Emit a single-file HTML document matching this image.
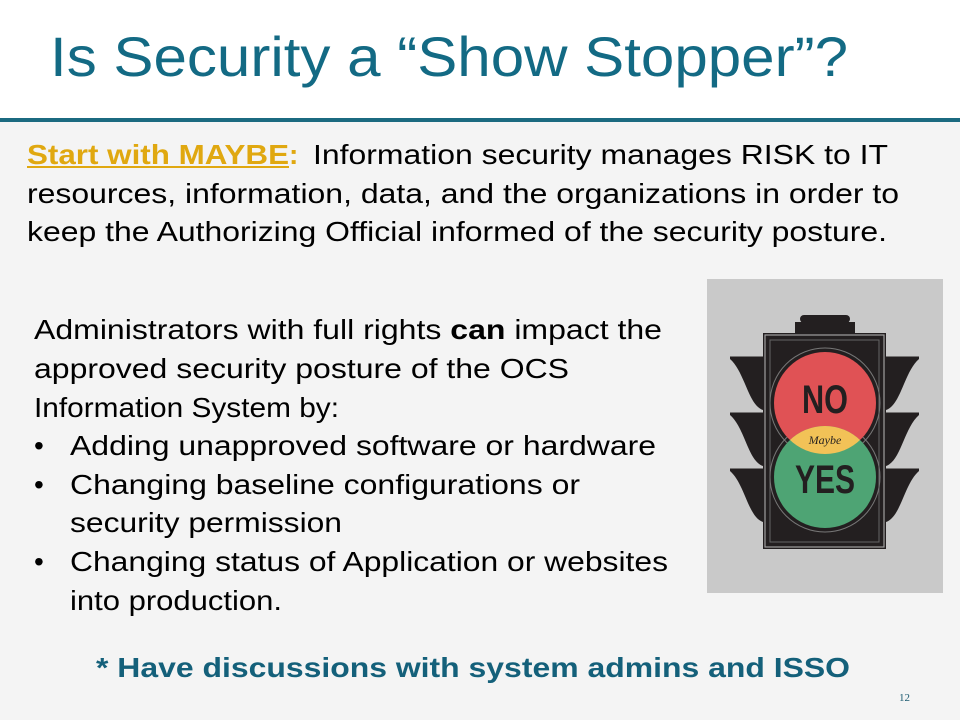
<!DOCTYPE html>
<html><head><meta charset="utf-8"><style>
html,body{margin:0;padding:0;width:960px;height:720px;overflow:hidden;background:#fff}
svg{display:block}
text{font-family:"Liberation Sans",Arial,sans-serif}
</style></head><body>
<svg width="960" height="720" viewBox="0 0 960 720" xmlns="http://www.w3.org/2000/svg">
<defs><clipPath id="rc"><circle cx="825" cy="403" r="51"/></clipPath></defs>
<rect x="0" y="0" width="960" height="118" fill="#fff"/>
<rect x="0" y="122" width="960" height="598" fill="#f4f4f4"/>
<rect x="0" y="118" width="960" height="4" fill="#1b6a80"/>
<text x="50" y="76" font-size="56" fill="#136a84" textLength="798" lengthAdjust="spacingAndGlyphs">Is Security a “Show Stopper”?</text>

<g font-size="28" fill="#000">
<text x="27" y="164" font-weight="bold" fill="#e0a810" textLength="262" lengthAdjust="spacingAndGlyphs">Start with MAYBE</text>
<rect x="27" y="166" width="262" height="2" fill="#e0a810"/>
<text x="289" y="164" font-weight="bold" fill="#e0a810">:</text>
<text x="313" y="164" textLength="575" lengthAdjust="spacingAndGlyphs">Information security manages RISK to IT</text>
<text x="27" y="203" textLength="872" lengthAdjust="spacingAndGlyphs">resources, information, data, and the organizations in order to</text>
<text x="27" y="241" textLength="860" lengthAdjust="spacingAndGlyphs">keep the Authorizing Official informed of the security posture.</text>

<text x="34" y="339" textLength="628" lengthAdjust="spacingAndGlyphs">Administrators with full rights <tspan font-weight="bold">can</tspan> impact the</text>
<text x="34" y="378" textLength="535" lengthAdjust="spacingAndGlyphs">approved security posture of the OCS</text>
<text x="34" y="417" textLength="305" lengthAdjust="spacingAndGlyphs">Information System by:</text>
<text x="34" y="455">•</text>
<text x="70" y="455" textLength="586" lengthAdjust="spacingAndGlyphs">Adding unapproved software or hardware</text>
<text x="34" y="494">•</text>
<text x="70" y="494" textLength="510" lengthAdjust="spacingAndGlyphs">Changing baseline configurations or</text>
<text x="70" y="532" textLength="272" lengthAdjust="spacingAndGlyphs">security permission</text>
<text x="34" y="571">•</text>
<text x="70" y="571" textLength="598" lengthAdjust="spacingAndGlyphs">Changing status of Application or websites</text>
<text x="70" y="610" textLength="212" lengthAdjust="spacingAndGlyphs">into production.</text>
</g>
<text x="96" y="677" font-size="28" font-weight="bold" fill="#14607a" textLength="754" lengthAdjust="spacingAndGlyphs">* Have discussions with system admins and ISSO</text>
<text x="899" y="701" font-size="11" fill="#1b5a70" style="font-family:'Liberation Serif',serif">12</text>

<!-- traffic light -->
<rect x="707" y="279" width="236" height="314" fill="#c9c9c9"/>
<g fill="#231f20">
<rect x="800" y="315" width="50" height="8" rx="4"/>
<rect x="795" y="322" width="60" height="12"/>
<path d="M730 356 H763 V410 C748 405 745 372 730 359Z"/>
<path d="M730 412 H763 V466 C748 461 745 428 730 415Z"/>
<path d="M730 468 H763 V522 C748 517 745 484 730 471Z"/>
<path d="M919 356 H886 V410 C901 405 904 372 919 359Z"/>
<path d="M919 412 H886 V466 C901 461 904 428 919 415Z"/>
<path d="M919 468 H886 V522 C901 517 904 484 919 471Z"/>
<rect x="763" y="333" width="123" height="216"/>
</g>
<g stroke="#c9c9c9" stroke-width="1">
<line x1="730" y1="356" x2="763" y2="356"/><line x1="730" y1="412" x2="763" y2="412"/><line x1="730" y1="468" x2="763" y2="468"/>
<line x1="886" y1="356" x2="919" y2="356"/><line x1="886" y1="412" x2="919" y2="412"/><line x1="886" y1="468" x2="919" y2="468"/>
</g>
<rect x="765" y="335" width="119" height="212" fill="none" stroke="#a0a0a0" stroke-width="1.2"/>
<rect x="770" y="340" width="109" height="202" fill="none" stroke="#666" stroke-width="1"/>
<circle cx="825" cy="403" r="55" fill="none" stroke="#777" stroke-width="1"/>
<circle cx="825" cy="477" r="55" fill="none" stroke="#777" stroke-width="1"/>
<circle cx="825" cy="403" r="51" fill="#e05255"/>
<circle cx="825" cy="477" r="51" fill="#4ea474"/>
<circle cx="825" cy="477" r="51" fill="#f2c257" clip-path="url(#rc)"/>
<text x="825" y="413" font-size="40" font-weight="bold" fill="#231f20" text-anchor="middle" textLength="46" lengthAdjust="spacingAndGlyphs">NO</text>
<text x="825" y="444" font-size="12" font-style="italic" fill="#231f20" text-anchor="middle" style="font-family:'Liberation Serif',serif">Maybe</text>
<text x="825" y="493" font-size="40" font-weight="bold" fill="#231f20" text-anchor="middle" textLength="60" lengthAdjust="spacingAndGlyphs">YES</text>
</svg>
</body></html>
